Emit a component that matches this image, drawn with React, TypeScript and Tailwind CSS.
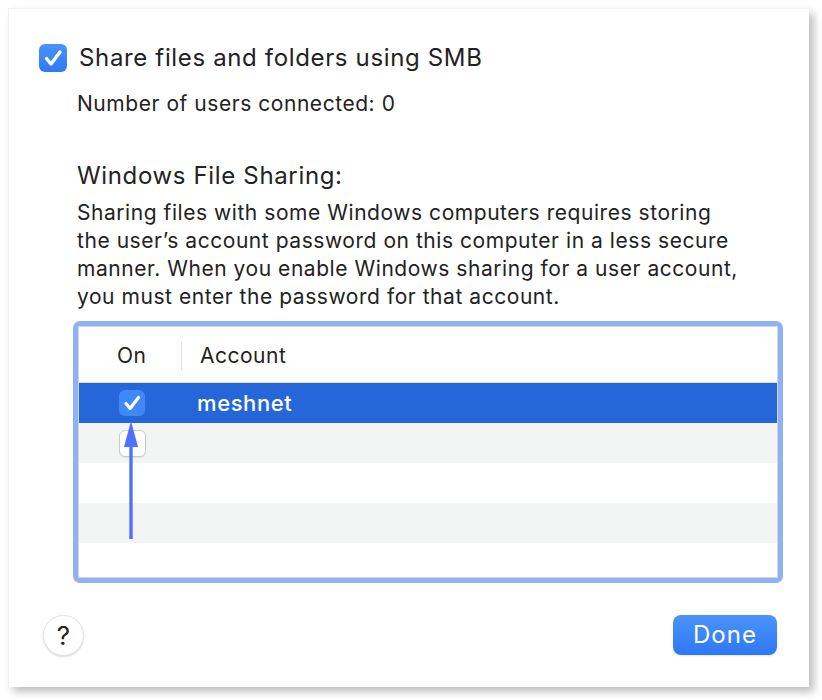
import React from 'react';

const Check: React.FC<{ className?: string }> = ({ className }) => (
  <svg viewBox="0 0 28 28" className={className} fill="none">
    <path d="M7.5 14.5l4.5 5.5 9-12" stroke="white" strokeWidth="3.4" strokeLinecap="round" strokeLinejoin="round" />
  </svg>
);

const rows = ['bg-[#f3f4f4]', 'bg-white', 'bg-[#f3f4f4]'];

export default function App() {
  return (
    <div className="min-h-[700px] bg-white pl-[8px] pt-[8px] font-['Inter','Liberation_Sans',sans-serif] text-[#222]">
      <div className="w-[801px] h-[679px] bg-white border-t border-l border-[#efefef] shadow-[5px_5px_8px_rgba(0,0,0,0.25)] flex flex-col pl-[30px] pr-[31px]">
        {/* SMB toggle */}
        <div className="flex items-center gap-[12px] mt-[35px] h-[28px]">
          <div className="w-[28px] h-[28px] rounded-[6px] bg-gradient-to-b from-[#4a92fa] to-[#2f79f4] flex items-center justify-center">
            <Check className="w-[28px] h-[28px]" />
          </div>
          <span className="text-[24px] leading-[28px] tracking-[0.65px]">Share files and folders using SMB</span>
        </div>
        <div className="ml-[38px] mt-[18px] text-[21px] leading-[28px] tracking-[0.55px]">Number of users connected: 0</div>

        <div className="ml-[38px] mt-[44px] text-[24px] leading-[28px] tracking-[0.65px]">Windows File Sharing:</div>
        <p className="ml-[38px] mt-[9px] text-[21px] leading-[28px] tracking-[0.55px] w-[700px]">
          Sharing files with some Windows computers requires storing<br />
          the user’s account password on this computer in a less secure<br />
          manner. When you enable Windows sharing for a user account,<br />
          you must enter the password for that account.
        </p>

        {/* Accounts table */}
        <div className="ml-[34px] mt-[10px] w-[710px] h-[262px] rounded-[7px] bg-[#8fb1f6] p-[5px]">
          <div className="relative h-full border border-[#d4d4d4] bg-white flex flex-col">
            <div className="h-[56px] flex items-center text-[21px] tracking-[0.5px] border-b border-[#dcdcdc] pt-[2px]">
              <span className="ml-[38px] w-[64px]">On</span>
              <span className="w-px h-[30px] bg-[#e2e2e2]" />
              <span className="ml-[18px]">Account</span>
            </div>
            <div className="h-[40px] bg-[#2567d8] flex items-center">
              <div className="ml-[40px] w-[26px] h-[26px] rounded-[6px] bg-[#3f88f7] flex items-center justify-center">
                <Check className="w-[26px] h-[26px]" />
              </div>
              <span className="ml-[52px] text-[22px] font-medium tracking-[0.6px] text-white">meshnet</span>
            </div>
            {rows.map((c, i) => (
              <div key={i} className={`h-[40px] flex items-center ${c}`}>
                {i === 0 && (
                  <div className="ml-[40px] w-[27px] h-[27px] rounded-[6px] bg-white border border-[#cbcbcb] shadow-[0_1px_1px_rgba(0,0,0,0.08)]" />
                )}
              </div>
            ))}
            <div className="flex-1 bg-white" />

            {/* annotation arrow */}
            <svg className="absolute left-[40px] top-[90px] w-[24px] h-[125px]" viewBox="0 0 24 125" fill="none">
              <path d="M12 20V122" stroke="#5170fe" strokeWidth="3.4" />
              <path d="M12 4L5 30H19Z" fill="#5170fe" />
            </svg>
          </div>
        </div>

        {/* footer */}
        <div className="mt-[32px] flex items-center justify-between">
          <div className="ml-[4px] w-[41px] h-[41px] rounded-full bg-white border border-[#e2e2e2] shadow-[0_1px_2px_rgba(0,0,0,0.15)] flex items-center justify-center text-[26px] text-[#222]">
            ?
          </div>
          <button className="mr-[1px] -mt-[1px] w-[104px] h-[40px] rounded-[8px] bg-gradient-to-b from-[#4b93fa] to-[#2d78f5] text-white text-[24px] tracking-[1px] shadow-[0_1px_2px_rgba(0,0,0,0.1)]">
            Done
          </button>
        </div>
      </div>
    </div>
  );
}
